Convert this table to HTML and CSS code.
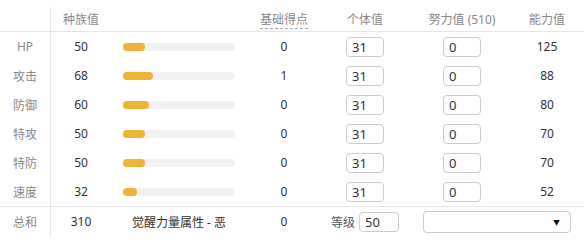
FILE: index.html
```html
<!DOCTYPE html>
<html lang="zh-CN">
  <head>
    <meta charset="UTF-8" />
    <meta name="viewport" content="width=device-width, initial-scale=1.0" />
    <title>能力值计算</title>
    <link rel="stylesheet" href="styles.css">
  </head>
  <body>
    <!-- =========== stats table ========= -->
    <table class="stat-table">
      <colgroup>
        <col class="col-name" />
        <col class="col-base" />
        <col class="col-bar" />
        <col class="col-ev-yield" />
        <col class="col-iv" />
        <col class="col-ev" />
        <col class="col-total" />
      </colgroup>
      <thead>
        <tr>
          <th class="name"></th>
          <th>种族值</th>
          <th></th>
          <th><span class="hint">基础得点</span></th>
          <th>个体值</th>
          <th>努力值 (510)</th>
          <th class="total">能力值</th>
        </tr>
      </thead>
      <tbody>
        <tr>
          <td class="name">HP</td>
          <td>50</td>
          <td><div class="bar"><div class="bar-fill" style="width: 22px"></div></div></td>
          <td>0</td>
          <td><input class="num" type="text" value="31" /></td>
          <td><input class="num" type="text" value="0" /></td>
          <td class="total">125</td>
        </tr>
        <tr>
          <td class="name">攻击</td>
          <td>68</td>
          <td><div class="bar"><div class="bar-fill" style="width: 30px"></div></div></td>
          <td>1</td>
          <td><input class="num" type="text" value="31" /></td>
          <td><input class="num" type="text" value="0" /></td>
          <td class="total">88</td>
        </tr>
        <tr>
          <td class="name">防御</td>
          <td>60</td>
          <td><div class="bar"><div class="bar-fill" style="width: 26px"></div></div></td>
          <td>0</td>
          <td><input class="num" type="text" value="31" /></td>
          <td><input class="num" type="text" value="0" /></td>
          <td class="total">80</td>
        </tr>
        <tr>
          <td class="name">特攻</td>
          <td>50</td>
          <td><div class="bar"><div class="bar-fill" style="width: 22px"></div></div></td>
          <td>0</td>
          <td><input class="num" type="text" value="31" /></td>
          <td><input class="num" type="text" value="0" /></td>
          <td class="total">70</td>
        </tr>
        <tr>
          <td class="name">特防</td>
          <td>50</td>
          <td><div class="bar"><div class="bar-fill" style="width: 22px"></div></div></td>
          <td>0</td>
          <td><input class="num" type="text" value="31" /></td>
          <td><input class="num" type="text" value="0" /></td>
          <td class="total">70</td>
        </tr>
        <tr>
          <td class="name">速度</td>
          <td>32</td>
          <td><div class="bar"><div class="bar-fill" style="width: 14px"></div></div></td>
          <td>0</td>
          <td><input class="num" type="text" value="31" /></td>
          <td><input class="num" type="text" value="0" /></td>
          <td class="total">52</td>
        </tr>
      </tbody>
      <tfoot>
        <tr>
          <td class="name">总和</td>
          <td>310</td>
          <td>觉醒力量属性 - 恶</td>
          <td>0</td>
          <td><span class="level-label">等级</span><input class="num level" type="text" value="50" /></td>
          <td colspan="2" class="nature-cell">
            <div class="select"><span class="arrow">▼</span></div>
          </td>
        </tr>
      </tfoot>
    </table>
  </body>
</html>
```

FILE: styles.css
```css
* {
  margin: 0;
  padding: 0;
  box-sizing: border-box;
}

body {
  background: #fff;
  color: #333;
  font-family: "Noto Sans", "Noto Sans CJK SC", sans-serif;
  font-size: 12px;
}

.stat-table {
  margin-top: 7px;
  width: 584px;
  table-layout: fixed;
  border-collapse: separate;
  border-spacing: 0;
}

.col-name { width: 51px; }
.col-base { width: 60px; }
.col-bar { width: 136px; }
.col-ev-yield { width: 74px; }
.col-iv { width: 88px; }
.col-ev { width: 106px; }
.col-total { width: 69px; }

th,
td {
  text-align: center;
  vertical-align: middle;
  font-weight: normal;
  white-space: nowrap;
}

th {
  height: 25px;
  color: #888;
  border-bottom: 1px solid #e6e6e6;
}

tbody td {
  height: 29px;
}

tfoot td {
  height: 30px;
  border-top: 1px solid #e6e6e6;
}

.total {
  padding-right: 5px;
}

.name {
  color: #888;
  border-right: 1px solid #e6e6e6;
}

.hint {
  border-bottom: 1px dashed #aaa;
}

/* base stat bar */
.bar {
  width: 112px;
  height: 8px;
  margin: 0 auto;
  background: #f2f2f2;
  border-radius: 4px;
}

.bar-fill {
  height: 8px;
  background: #efb338;
  border-radius: 4px;
}

input.num {
  width: 38px;
  height: 20px;
  padding: 0 5px;
  border: 1px solid #ccc;
  border-radius: 4px;
  font-family: "Noto Sans", sans-serif;
  font-size: 13px;
  color: #333;
  outline: none;
  vertical-align: middle;
}

input.level {
  width: 40px;
}

.level-label {
  color: #555;
  margin-right: 4px;
  vertical-align: middle;
}

.nature-cell {
  text-align: left;
}

.select {
  margin-left: 14px;
  width: 148px;
  height: 22px;
  border: 1px solid #ccc;
  border-radius: 4px;
  display: flex;
  align-items: center;
  justify-content: flex-end;
  padding-right: 10px;
}

.arrow {
  font-size: 7px;
  color: #111;
}
```
